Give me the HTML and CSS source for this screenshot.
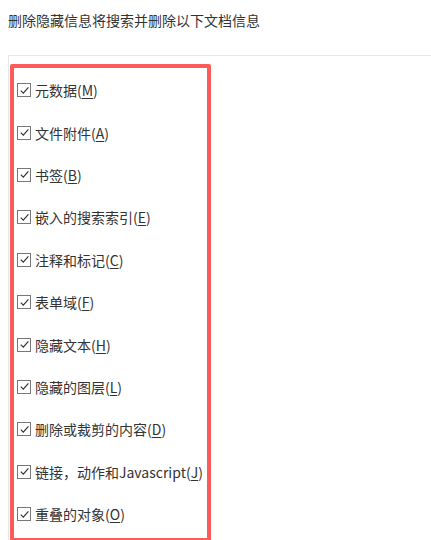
FILE: index.html
```html
<!DOCTYPE html>
<html lang="zh-CN">
<head>
    <meta charset="UTF-8">
    <title>删除隐藏信息</title>
    <link rel="stylesheet" href="styles.css">
</head>
<body>
    <p class="intro">删除隐藏信息将搜索并删除以下文档信息</p>

    <div class="panel">
        <div class="options">
            <label class="option"><span class="box"><svg viewBox="0 0 11 11"><path d="M1.8 5.6 L4.3 8.1 L9.4 2.4"/></svg></span>元数据(<u>M</u>)</label>
            <label class="option"><span class="box"><svg viewBox="0 0 11 11"><path d="M1.8 5.6 L4.3 8.1 L9.4 2.4"/></svg></span>文件附件(<u>A</u>)</label>
            <label class="option"><span class="box"><svg viewBox="0 0 11 11"><path d="M1.8 5.6 L4.3 8.1 L9.4 2.4"/></svg></span>书签(<u>B</u>)</label>
            <label class="option"><span class="box"><svg viewBox="0 0 11 11"><path d="M1.8 5.6 L4.3 8.1 L9.4 2.4"/></svg></span>嵌入的搜索索引(<u>E</u>)</label>
            <label class="option"><span class="box"><svg viewBox="0 0 11 11"><path d="M1.8 5.6 L4.3 8.1 L9.4 2.4"/></svg></span>注释和标记(<u>C</u>)</label>
            <label class="option"><span class="box"><svg viewBox="0 0 11 11"><path d="M1.8 5.6 L4.3 8.1 L9.4 2.4"/></svg></span>表单域(<u>F</u>)</label>
            <label class="option"><span class="box"><svg viewBox="0 0 11 11"><path d="M1.8 5.6 L4.3 8.1 L9.4 2.4"/></svg></span>隐藏文本(<u>H</u>)</label>
            <label class="option"><span class="box"><svg viewBox="0 0 11 11"><path d="M1.8 5.6 L4.3 8.1 L9.4 2.4"/></svg></span>隐藏的图层(<u>L</u>)</label>
            <label class="option"><span class="box"><svg viewBox="0 0 11 11"><path d="M1.8 5.6 L4.3 8.1 L9.4 2.4"/></svg></span>删除或裁剪的内容(<u>D</u>)</label>
            <label class="option"><span class="box"><svg viewBox="0 0 11 11"><path d="M1.8 5.6 L4.3 8.1 L9.4 2.4"/></svg></span>链接，动作和Javascript(<u>J</u>)</label>
            <label class="option"><span class="box"><svg viewBox="0 0 11 11"><path d="M1.8 5.6 L4.3 8.1 L9.4 2.4"/></svg></span>重叠的对象(<u>O</u>)</label>
        </div>
    </div>
</body>
</html>
```

FILE: styles.css
```css
body {
    margin: 0;
    font-family: "Noto Sans CJK SC", "Liberation Sans", sans-serif;
    font-size: 14px;
    color: #333;
    background: #fff;
    overflow: hidden;
}

.intro {
    margin: 0;
    padding: 11px 0 0 8px;
    height: 44px;
    line-height: 19px;
    box-sizing: border-box;
}

.panel {
    margin-top: 11px;
    margin-left: 8px;
    border-top: 1px solid #e6e6e6;
    border-left: 1px solid #e6e6e6;
    padding: 8px 0 0 1px;
}

.options {
    width: 190px;
    border: 4px solid #ff5a5a;
    border-radius: 2px;
    padding: 1px 0 3px 3px;
}

.option {
    display: flex;
    align-items: center;
    height: 42.4px;
    white-space: nowrap;
}

.option u {
    text-underline-offset: 2px;
}

.box {
    width: 14px;
    height: 14px;
    box-sizing: border-box;
    border: 1px solid #777;
    margin-right: 4px;
    display: flex;
    align-items: center;
    justify-content: center;
    flex-shrink: 0;
}

.box svg {
    width: 11px;
    height: 11px;
    fill: none;
    stroke: #333;
    stroke-width: 1.2;
}
```
